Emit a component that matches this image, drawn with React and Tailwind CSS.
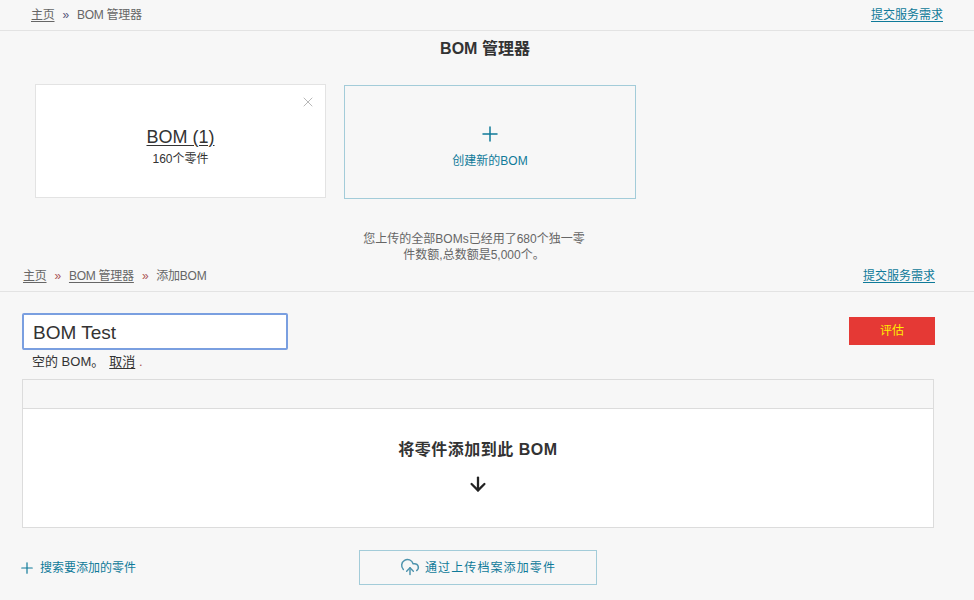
import { ArrowDown, CloudUpload, Plus, X } from "lucide-react";

const font = "font-['Liberation_Sans','Noto_Sans_CJK_SC',sans-serif]";

function Crumbs({ items, current, linkClass }) {
  return (
    <div className="flex items-center text-xs tracking-[-0.25px] text-[#666]">
      {items.map((item) => (
        <span key={item} className="flex items-center">
          <a className="underline underline-offset-2">{item}</a>
          <span className={`mx-2 ${linkClass}`}>»</span>
        </span>
      ))}
      <span>{current}</span>
    </div>
  );
}

export default function App() {
  return (
    <div className={`${font} w-[974px] h-[600px] overflow-hidden bg-[#f7f7f7] text-[#333]`}>
      {/* BOM list */}
      <header className="h-[31px] flex items-center justify-between pl-[31px] pr-[31px] border-b border-[#e3e3e3]">
        <Crumbs items={["主页"]} current="BOM 管理器" linkClass="text-[#557]" />
        <a className="text-xs text-[#0f7a99] underline underline-offset-2">提交服务需求</a>
      </header>

      <h1 className="mt-[8px] h-[20px] leading-[20px] text-center text-base font-bold text-[#333] pr-[4px]">BOM 管理器</h1>

      <section className="mt-[25px] pl-[35px] flex items-start gap-[18px]">
        <div className="relative w-[291px] h-[114px] bg-white border border-[#e3e3e3] flex flex-col items-center justify-center pt-[10px]">
          <X size={16} strokeWidth={1.5} className="absolute top-[9px] right-[9px] text-[#b8b8b8]" />
          <a className="text-lg leading-[22px] text-[#333] underline underline-offset-2">BOM (1)</a>
          <span className="mt-[3px] text-xs leading-[16px] text-[#333]">160个零件</span>
        </div>
        <div className="mt-px w-[292px] h-[114px] border border-[#a3ccd9] flex flex-col items-center justify-center text-[#0f7a99] pt-[6px]">
          <Plus size={24} strokeWidth={1.5} />
          <span className="mt-[7px] text-xs leading-[16px]">创建新的BOM</span>
        </div>
      </section>

      <p className="mt-[32px] mx-auto w-[228px] -translate-x-[13px] text-center text-xs leading-[16px] text-[#666]">
        您上传的全部BOMs已经用了680个独一零件数额,总数额是5,000个。
      </p>

      {/* add BOM */}
      <header className="h-[29px] flex items-center justify-between pl-[23px] pr-[39px] border-b border-[#e3e3e3] pb-[2px]">
        <Crumbs items={["主页", "BOM 管理器"]} current="添加BOM" linkClass="text-[#a55]" />
        <a className="text-xs text-[#0f7a99] underline underline-offset-2">提交服务需求</a>
      </header>

      <section className="pl-[22px] pr-[39px] pt-[21px] flex justify-between items-start">
        <div>
          <input
            readOnly
            value="BOM Test"
            className="block w-[266px] h-[37px] pl-[9px] pr-[10px] pt-[2px] bg-white border-2 border-[#7a9fe0] rounded-[2px] text-[19px] text-[#333] outline-none"
          />
          <p className="mt-[3px] pl-[10px] text-[13px] leading-[18px] text-[#333]">
            空的 BOM。<a className="ml-[5px] underline underline-offset-2">取消</a> <span className="text-[#a55]">.</span>
          </p>
        </div>
        <button className="mt-[4px] w-[86px] h-[28px] bg-[#e53935] text-xs text-[#ffee00]">评估</button>
      </section>

      <section className="mt-[8px] ml-[22px] w-[912px] h-[149px] border border-[#dcdcdc] flex flex-col">
        <div className="h-[29px] border-b border-[#dcdcdc]" />
        <div className="flex-1 bg-white flex flex-col items-center pt-[30px]">
          <h2 className="text-base tracking-[0.5px] leading-[22px] font-bold text-[#333]">将零件添加到此 BOM</h2>
          <ArrowDown size={22} strokeWidth={2.5} className="mt-[12px] text-[#222]" />
        </div>
      </section>

      <section className="mt-[22px] pl-[18px] flex items-center">
        <a className="w-[341px] flex items-center text-xs text-[#0f7a99]">
          <Plus size={18} strokeWidth={1.6} />
          <span className="ml-[4px]">搜索要添加的零件</span>
        </a>
        <button className="w-[238px] h-[35px] border border-[#a3ccd9] flex items-center justify-center text-xs text-[#0f7a99]">
          <CloudUpload size={20} strokeWidth={1.75} className="text-[#4d93ad] -mt-[2px]" />
          <span className="ml-[5px] tracking-[1.1px]">通过上传档案添加零件</span>
        </button>
      </section>
    </div>
  );
}
